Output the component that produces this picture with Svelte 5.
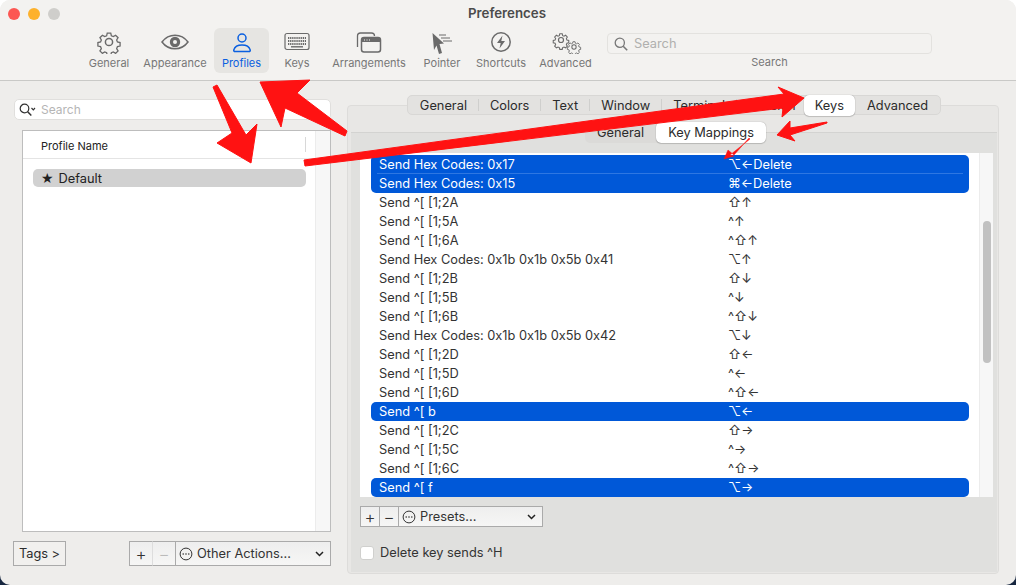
<script lang="ts">
  const tools = [
    { label: "General", icon: "gear", width: 66 },
    { label: "Appearance", icon: "eye", width: 66 },
    { label: "Profiles", icon: "person", width: 55, active: true },
    { label: "Keys", icon: "keyboard", width: 56 },
    { label: "Arrangements", icon: "windows", width: 88 },
    { label: "Pointer", icon: "pointer", width: 58 },
    { label: "Shortcuts", icon: "bolt", width: 60 },
    { label: "Advanced", icon: "gears", width: 69 },
  ];

  const tabs = ["General", "Colors", "Text", "Window", "Terminal", "Session"];

  const rows = [
    { action: "Send Hex Codes: 0x17", keys: "⌥←Delete", sel: true, first: true },
    { action: "Send Hex Codes: 0x15", keys: "⌘←Delete", sel: true, last: true },
    { action: "Send ^[ [1;2A", keys: "⇧↑" },
    { action: "Send ^[ [1;5A", keys: "^↑" },
    { action: "Send ^[ [1;6A", keys: "^⇧↑" },
    { action: "Send Hex Codes: 0x1b 0x1b 0x5b 0x41", keys: "⌥↑" },
    { action: "Send ^[ [1;2B", keys: "⇧↓" },
    { action: "Send ^[ [1;5B", keys: "^↓" },
    { action: "Send ^[ [1;6B", keys: "^⇧↓" },
    { action: "Send Hex Codes: 0x1b 0x1b 0x5b 0x42", keys: "⌥↓" },
    { action: "Send ^[ [1;2D", keys: "⇧←" },
    { action: "Send ^[ [1;5D", keys: "^←" },
    { action: "Send ^[ [1;6D", keys: "^⇧←" },
    { action: "Send ^[ b", keys: "⌥←", sel: true, first: true, last: true },
    { action: "Send ^[ [1;2C", keys: "⇧→" },
    { action: "Send ^[ [1;5C", keys: "^→" },
    { action: "Send ^[ [1;6C", keys: "^⇧→" },
    { action: "Send ^[ f", keys: "⌥→", sel: true, first: true, last: true },
  ];
</script>

{#snippet gear(cx, cy, r)}
  <g transform="translate({cx} {cy}) scale({r / 10})">
    <path d="M-2 -10h4l.7 3 2.200.9 2.600-1.600 2.800 2.800-1.600 2.600.9 2.200 3 .7v4l-3 .7-.9 2.200 1.600 2.600-2.800 2.800-2.600-1.600-2.200.9-.7 3h-4l-.7-3-2.200-.9-2.600 1.600-2.800-2.800 1.600-2.600-.9-2.200-3-.7v-4l3-.7.9-2.200-1.600-2.600 2.800-2.800 2.600 1.600 2.200-.9z" transform="scale(.88)" />
    <circle r="3.6" />
  </g>
{/snippet}

{#snippet dots()}
  <svg class="dots" width="14" height="14" viewBox="0 0 14 14">
    <circle cx="7" cy="7" r="5.9" fill="none" stroke="#333" stroke-width="1" />
    <circle cx="4.2" cy="7" r=".8" fill="#333" />
    <circle cx="7" cy="7" r=".8" fill="#333" />
    <circle cx="9.8" cy="7" r=".8" fill="#333" />
  </svg>
{/snippet}

{#snippet chevron()}
  <svg class="chev" width="9" height="6" viewBox="0 0 9 6">
    <path d="M1 1l3.500 3.500L8 1" fill="none" stroke="#222" stroke-width="1.500" />
  </svg>
{/snippet}

<div class="window">
  <header class="toolbar">
    <div class="lights">
      <span class="light red"></span>
      <span class="light amber"></span>
      <span class="light grey"></span>
    </div>
    <div class="title">Preferences</div>
    <div class="tools">
      {#each tools as t}
        <div class="tool" class:active={t.active} style="width:{t.width}px">
          <svg class="tool-icon" width="40" height="24" viewBox="0 0 40 24" fill="none" stroke="currentColor" stroke-width="1.500">
            {#if t.icon === "gear"}
              {@render gear(20, 12, 10)}
            {:else if t.icon === "eye"}
              <path d="M7 12c3.400-4.600 7.800-6.800 13-6.800S29.600 7.400 33 12c-3.400 4.600-7.800 6.800-13 6.800S10.400 16.600 7 12z" />
              <circle cx="20" cy="12" r="5.200" fill="currentColor" stroke="none" />
              <circle cx="20" cy="12" r="2" fill="#f3f2f0" stroke="none" />
            {:else if t.icon === "person"}
              <circle cx="20" cy="8" r="4" />
              <path d="M13 21.500c-1 0-1.400-.8-1.200-1.600.9-3 4-4.900 8.200-4.900s7.300 1.900 8.200 4.900c.2.800-.2 1.600-1.200 1.600z" />
            {:else if t.icon === "keyboard"}
              <rect x="8" y="3.500" width="24" height="16" rx="2" stroke-width="1.200" />
              <path d="M11 8h18M11 11h18" stroke-width="2" stroke-dasharray="1.300 .8" />
              <path d="M11 14h18" stroke-width="2" stroke-dasharray="1.300 .8" />
              <path d="M14 16.800h12" stroke-width="1.400" />
            {:else if t.icon === "windows"}
              <path d="M8.500 17V6a3 3 0 0 1 3-3h11a3 3 0 0 1 3 3" stroke-width="1.300" />
              <rect x="12.500" y="7.500" width="19" height="14.500" rx="2.500" stroke-width="1.500" />
              <path d="M13 8h18v4H13z" fill="currentColor" stroke="none" />
              <path d="M15 10h1M17.500 10h1M20 10h1" stroke="#f3f2f0" stroke-width="1" />
            {:else if t.icon === "pointer"}
              <path d="M10.500 3l11.500 10.500-4.500.5 2.500 9-3 1-2.500-8.500L12 20z" fill="currentColor" stroke="none" />
              <path d="M17 5h7M19 8h9M21 11h9" stroke-width="1" />
            {:else if t.icon === "bolt"}
              <circle cx="20" cy="12" r="9.200" stroke-width="1.500" />
              <path d="M21.500 5.500l-5.500 7.500h3.700l-1.200 5.500 5.500-7.500h-3.700z" fill="currentColor" stroke="none" />
            {:else if t.icon === "gears"}
              <g stroke-width="1.700">
                {@render gear(15, 10, 7)}
                {@render gear(28, 17, 6)}
              </g>
            {/if}
          </svg>
          <span>{t.label}</span>
        </div>
      {/each}
      <div class="search-tool">
        <div class="search-field">
          <svg width="14" height="14" viewBox="0 0 14 14" fill="none" stroke="#777" stroke-width="1.300">
            <circle cx="5.800" cy="5.800" r="4.600" />
            <path d="M9.200 9.200l4 4" stroke-width="1.600" />
          </svg>
          <span>Search</span>
        </div>
        <span class="search-label">Search</span>
      </div>
    </div>
  </header>

  <main class="content">
    <section class="left">
      <div class="filter">
        <svg width="17" height="14" viewBox="0 0 17 14" fill="none" stroke="#333" stroke-width="1.200">
          <circle cx="5.500" cy="5.500" r="4.300" />
          <path d="M8.700 8.700l3.600 3.800" stroke-width="1.500" />
          <path d="M12.500 5l1.800 1.800L16 5" />
        </svg>
        <span>Search</span>
      </div>
      <div class="profiles">
        <div class="profiles-main">
          <div class="profiles-head"><span>Profile Name</span></div>
          <div class="profile-row"><span class="star">★</span><span>Default</span></div>
        </div>
        <div class="profiles-track"></div>
      </div>
      <div class="left-foot">
        <div class="btn tags">Tags &gt;</div>
        <div class="seg">
          <div class="seg-btn plus">+</div>
          <div class="seg-btn minus off">−</div>
          <div class="seg-btn pop others">
            {@render dots()}
            <span>Other Actions...</span>
            {@render chevron()}
          </div>
        </div>
      </div>
    </section>

    <section class="right">
      <div class="tabs">
        {#each tabs as tab}
          <div class="tab">{tab}</div>
        {/each}
        <div class="tab on">Keys</div>
        <div class="tab last">Advanced</div>
      </div>
      <div class="panel">
        <div class="subtabs">
          <div class="subtab">General</div>
          <div class="subtab on">Key Mappings</div>
        </div>
        <div class="mappings">
          <div class="map-list">
            {#each rows as r}
              <div class="map-row" class:sel={r.sel} class:first={r.first} class:last={r.last}>
                <span class="action">{r.action}</span>
                <span class="keys">{r.keys}</span>
              </div>
            {/each}
          </div>
          <div class="map-track"><div class="thumb"></div></div>
        </div>
        <div class="seg presets">
          <div class="seg-btn plus">+</div>
          <div class="seg-btn minus">−</div>
          <div class="seg-btn pop">
            {@render dots()}
            <span>Presets...</span>
            {@render chevron()}
          </div>
        </div>
        <label class="check">
          <span class="box"></span>
          <span>Delete key sends ^H</span>
        </label>
      </div>
    </section>
  </main>

  <!-- the red annotations drawn on top of the screenshot -->
  <svg class="marks" width="1016" height="585" viewBox="0 0 1016 585" fill="#ff1212" stroke="#ff1212" stroke-width="1" stroke-linejoin="round">
    <path d="M213 87l4-2 29 50 11-11-6 39-34-20 15-10z" />
    <path d="M260 82l50-2-13 13 50 38-2 5-60-28-4 19z" />
    <path d="M304 160l480-66-6-7 26 11-22 19 1-9-478 58z" />
    <path d="M827 122l-37 6 0-7-13 14 18 6-5-6 37-12z" />
    <path d="M749 138l-15 17-6-5-4 9 10-3-4-1 20-16z" stroke-width=".5" />
  </svg>
</div>

<style>
  :global(body) {
    margin: 0;
    background: linear-gradient(#fff 50%, #16263f 50%);
  }

  .window {
    position: relative;
    width: 1016px;
    height: 585px;
    overflow: hidden;
    display: flex;
    flex-direction: column;
    background: #eeedeb;
    border-radius: 10px;
    font-family: Inter, "Liberation Sans", "DejaVu Sans", sans-serif;
    font-size: 12.8px;
    color: #2b2b2b;
  }

  .toolbar {
    position: relative;
    flex: none;
    height: 81px;
    box-sizing: border-box;
    background: #f3f2f0;
    border-bottom: 1px solid #c9c9c7;
  }

  .lights {
    position: absolute;
    left: 8px;
    top: 8px;
    display: flex;
    gap: 8px;
  }

  .light {
    width: 12px;
    height: 12px;
    border-radius: 50%;
  }

  .red { background: #fc5753; }
  .amber { background: #fdb12c; }
  .grey { background: #cfcecb; }

  .title {
    padding: 6px 2px 0 0;
    text-align: center;
    font-weight: 600;
    font-size: 13.3px;
    line-height: 15px;
    color: #4b4b4b;
  }

  .tools {
    display: flex;
    margin: 7px 0 0 76px;
  }

  .tool {
    flex: none;
    height: 45px;
    display: flex;
    flex-direction: column;
    align-items: center;
    box-sizing: border-box;
    padding-top: 2px;
    border-radius: 6px;
    font-size: 11px;
    color: #777;
    white-space: nowrap;
  }

  .tool span {
    margin-top: 2px;
    line-height: 14px;
  }

  .tool.active {
    background: #e6e5e2;
    color: #0a5fe0;
    margin-left: 6px;
  }

  .tool-icon {
    display: block;
    color: #6a6a6a;
  }

  .active .tool-icon {
    color: #0a5fe0;
  }

  .search-tool {
    margin-left: 7px;
    width: 325px;
    padding-top: 5px;
    display: flex;
    flex-direction: column;
    align-items: center;
  }

  .search-field {
    box-sizing: border-box;
    width: 100%;
    height: 21px;
    display: flex;
    align-items: center;
    gap: 6px;
    padding-left: 6px;
    border: 1px solid #e3e2df;
    border-radius: 4px;
    font-size: 12.8px;
    color: #b0b0ae;
  }

  .search-label {
    margin-top: 1px;
    font-size: 11px;
    line-height: 14px;
    color: #777;
  }

  .content {
    flex: 1;
    display: flex;
    min-height: 0;
  }

  .left {
    flex: none;
    width: 318px;
    margin-left: 13px;
    display: flex;
    flex-direction: column;
  }

  .filter {
    box-sizing: border-box;
    height: 21px;
    margin-top: 18px;
    margin-left: 1px;
    display: flex;
    align-items: center;
    gap: 5px;
    padding-left: 4px;
    background: #fff;
    border: 1px solid #e0dfdd;
    border-radius: 5px;
    font-size: 12px;
    color: #b5b5b5;
  }

  .profiles {
    box-sizing: border-box;
    height: 402px;
    margin: 10px 0 0 9px;
    display: flex;
    background: #fff;
    border: 1px solid #bdbdbd;
  }

  .profiles-main {
    flex: 1;
  }

  .profiles-head {
    box-sizing: border-box;
    height: 28px;
    padding: 7px 0 0 18px;
    border-bottom: 1px solid #e4e4e4;
    font-size: 11px;
    line-height: 17px;
    color: #222;
    position: relative;
  }

  .profiles-head::after {
    content: "";
    position: absolute;
    right: 9px;
    top: 6px;
    height: 15px;
    border-right: 1px solid #d8d8d8;
  }

  .profile-row {
    box-sizing: border-box;
    height: 18px;
    margin: 10px 9px 0 10px;
    padding-left: 8px;
    display: flex;
    align-items: center;
    gap: 5px;
    background: #d1d1d1;
    border-radius: 5px;
    font-size: 12.8px;
    color: #222;
  }

  .star {
    font-family: "DejaVu Sans", sans-serif;
    font-size: 14px;
    line-height: 18px;
  }

  .profiles-track {
    flex: none;
    width: 14px;
    background: #f7f7f7;
    border-left: 1px solid #ececec;
  }

  .left-foot {
    margin-top: 9px;
    display: flex;
    justify-content: space-between;
    align-items: flex-start;
  }

  .btn {
    box-sizing: border-box;
    width: 53px;
    height: 25px;
    text-align: center;
    line-height: 23px;
    background: #f1f0ee;
    border: 1px solid #aaa;
    font-size: 12.8px;
  }

  .seg {
    display: flex;
    height: 25px;
    box-sizing: border-box;
  }

  .seg-btn {
    box-sizing: border-box;
    height: 100%;
    display: flex;
    align-items: center;
    justify-content: center;
    background: linear-gradient(#eee, #f6f6f5);
    border: 1px solid #aaa;
    margin-left: -1px;
    font-size: 17px;
    font-weight: 300;
    color: #333;
  }

  .plus { width: 24px; margin-left: 0; }
  .minus { width: 24px; }
  .minus.off { color: #bbb; border-left-color: #ddd; }

  .pop {
    justify-content: flex-start;
    padding: 0 6px 0 3px;
    gap: 4px;
    font-size: 12.8px;
    font-weight: 400;
  }

  .pop span { flex: 1; }
  .others { width: 156px; }
  .dots { flex: none; }
  .chev { flex: none; }

  .right {
    flex: none;
    width: 652px;
    margin-left: 16px;
    margin-top: 24px;
    height: 469px;
    box-sizing: border-box;
    background: #e8e7e5;
    border: 1px solid #dddcda;
    border-radius: 4px;
    padding: 0 1px 1px 3px;
    display: flex;
    flex-direction: column;
  }

  .tabs {
    align-self: center;
    flex: none;
    height: 20px;
    margin-top: -11px;
    display: flex;
    align-items: center;
    background: #e3e2e0;
    border: 1px solid #d8d7d5;
    border-radius: 5px;
    box-sizing: border-box;
  }

  .tab {
    box-sizing: border-box;
    height: 12px;
    padding: 0 11px;
    display: flex;
    align-items: center;
    border-right: 1px solid #cfcfcd;
    white-space: nowrap;
  }

  .tab:first-child { padding-left: 12px; }

  .tab.on, .subtab.on {
    height: 21px;
    background: #fff;
    border: none;
    border-radius: 5px;
    box-shadow: 0 0 1px rgba(0, 0, 0, .4), 0 1px 1px rgba(0, 0, 0, .15);
  }

  .tab.on { padding: 0 11px; margin-left: -4px; }
  .tab.last { border: none; padding: 0 12px; }

  .panel {
    flex: 1;
    margin-top: 17px;
    position: relative;
    background: #e0e0de;
    border-top: 1px solid #d3d3d1;
    padding: 0 0 0 9px;
    display: flex;
    flex-direction: column;
  }

  .subtabs {
    align-self: flex-start;
    height: 21px;
    margin: -11px 0 0 225px;
    display: flex;
    align-items: center;
    background: #dbdad8;
    border-radius: 5px;
  }

  .subtab { padding: 0 12px; white-space: nowrap; }
  .subtab.on { display: flex; align-items: center; }

  .mappings {
    height: 344px;
    margin-top: 10px;
    margin-right: 4px;
    display: flex;
    background: #fff;
    overflow: hidden;
  }

  .map-list {
    flex: 1;
    padding: 2px 10px 0 11px;
    min-width: 0;
  }

  .map-row {
    height: 19px;
    display: flex;
    align-items: center;
    padding-left: 8px;
    line-height: 19px;
    color: #333;
    white-space: nowrap;
  }

  .map-row.sel {
    background: #0058d8;
    color: #fff;
    position: relative;
  }

  .map-row.first { border-radius: 5px 5px 0 0; }
  .map-row.last { border-radius: 0 0 5px 5px; }
  .map-row.first.last { border-radius: 5px; }

  .map-row.first:not(.last)::after {
    content: "";
    position: absolute;
    left: 6px;
    right: 6px;
    bottom: 0;
    border-bottom: 1px solid #2e77e2;
  }

  .action { flex: none; width: 349px; }

  .map-track {
    flex: none;
    width: 14px;
    background: #f7f7f7;
    border-left: 1px solid #ececec;
    padding: 68px 0 0 3px;
    box-sizing: border-box;
  }

  .thumb {
    width: 8px;
    height: 142px;
    border-radius: 4px;
    background: #c1c1c1;
  }

  .presets {
    margin-top: 9px;
    height: 21px;
    align-self: flex-start;
  }

  .presets .plus { width: 20px; }
  .presets .minus { width: 20px; }
  .presets .pop { width: 145px; }

  .check {
    margin-top: 18px;
    display: flex;
    align-items: center;
    gap: 6px;
    color: #333;
  }

  .box {
    box-sizing: border-box;
    width: 14px;
    height: 14px;
    background: #fff;
    border: 1px solid #d0d0ce;
    border-radius: 3px;
  }

  .marks {
    position: absolute;
    left: 0;
    top: 0;
    pointer-events: none;
  }
</style>
